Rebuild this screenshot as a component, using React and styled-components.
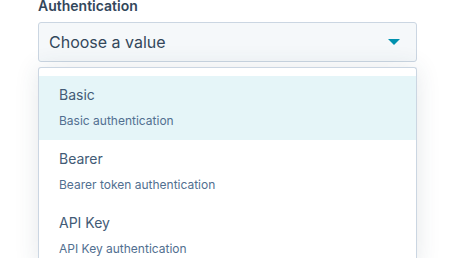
import styled, { createGlobalStyle } from 'styled-components';

const GlobalStyle = createGlobalStyle`
  html, body {
    margin: 0;
    padding: 0;
    background: #ffffff;
    font-family: Inter, "Noto Sans", sans-serif;
    overflow: hidden;
  }
`;

const Page = styled.div`
  padding: 0 42px 0 38px;
  margin-top: -2px;
`;

const Label = styled.div`
  font-size: 14px;
  line-height: 16px;
  font-weight: 600;
  color: #33475b;
  margin-bottom: 8px;
`;

const Select = styled.div`
  height: 38px;
  display: flex;
  align-items: center;
  justify-content: space-between;
  padding: 0 16px 0 10px;
  background: #f5f8fa;
  border: 1px solid #cbd6e2;
  border-radius: 3px;
  color: #33475b;
  font-size: 16px;
`;

const Caret = styled.span`
  width: 0;
  height: 0;
  border-left: 6px solid transparent;
  border-right: 6px solid transparent;
  border-top: 6px solid #0091ae;
`;

const Menu = styled.div`
  margin-top: 5px;
  padding-top: 8px;
  background: #ffffff;
  border: 1px solid #cbd6e2;
  border-bottom: none;
  border-radius: 3px 3px 0 0;
  box-shadow: 0 1px 24px 0 rgba(45, 62, 80, 0.12);
`;

const Option = styled.div`
  height: 64px;
  box-sizing: border-box;
  padding: 9px 20px 0;
  background: ${(p) => (p.active ? '#e5f5f8' : '#ffffff')};
`;

const OptionTitle = styled.div`
  font-size: 14px;
  line-height: 20px;
  color: #425b76;
`;

const OptionDesc = styled.div`
  margin-top: 8px;
  font-size: 12px;
  line-height: 16px;
  color: #516f90;
`;

const options = [
  { title: 'Basic', desc: 'Basic authentication' },
  { title: 'Bearer', desc: 'Bearer token authentication' },
  { title: 'API Key', desc: 'API Key authentication' },
];

const App = () => {
  return (
    <Page>
      <GlobalStyle />
      <Label>Authentication</Label>
      <Select>
        Choose a value
        <Caret />
      </Select>
      <Menu>
        {options.map((o, i) => (
          <Option key={o.title} active={i === 0}>
            <OptionTitle>{o.title}</OptionTitle>
            <OptionDesc>{o.desc}</OptionDesc>
          </Option>
        ))}
      </Menu>
    </Page>
  );
};

export default App;
